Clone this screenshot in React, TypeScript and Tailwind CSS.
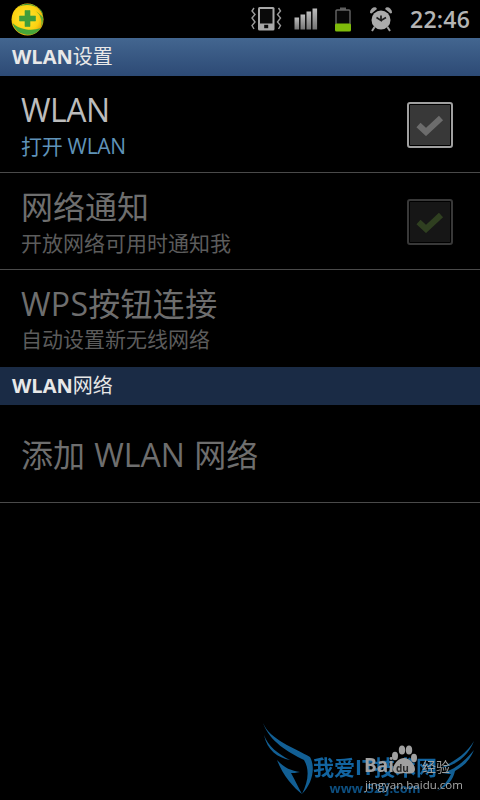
const font = { fontFamily: '"Open Sans", "Noto Sans CJK SC", sans-serif' };

function Header({ text, light }: { text: string; light?: boolean }) {
  return (
    <div
      className={`h-[38px] flex items-center pl-3 text-[20px] leading-none font-bold text-[#e8e8e8] ${
        light ? "bg-gradient-to-b from-[#436690] to-[#2d4a75]" : "bg-[#1a2b45]"
      }`}
    >
      <span className="whitespace-nowrap">
        WLAN<span className="font-normal">{text}</span>
      </span>
    </div>
  );
}

function Check({ on }: { on?: boolean }) {
  return (
    <div
      className={`mt-[2px] w-[46px] h-[46px] rounded-[3px] border-2 p-[1px] ${
        on ? "border-[#a0a0a0]" : "border-[#383838]"
      }`}
    >
      <div className={`w-full h-full flex items-center justify-center ${on ? "bg-[#383838]" : "bg-[#161616]"}`}>
        <svg width="28" height="22" viewBox="0 0 28 22">
          <path
            d="M2.5 11 L10 18 L25 4"
            fill="none"
            stroke={on ? "#6c6c6c" : "#2f3f20"}
            strokeWidth="6"
          />
        </svg>
      </div>
    </div>
  );
}

function Row({
  title,
  sub,
  titleClass,
  subClass,
  check,
  last,
}: {
  title: string;
  sub?: string;
  titleClass: string;
  subClass?: string;
  check?: "on" | "off";
  last?: boolean;
}) {
  return (
    <div
      className={`flex items-center pl-[21px] pr-[27px] border-b border-[#4a4a4a] ${
        last ? "h-[98px] pt-[2px]" : "h-[97px]"
      }`}
    >
      <div className="flex-1 min-w-0">
        <div className={`text-[32px] leading-[44px] whitespace-nowrap ${titleClass}`}>{title}</div>
        {sub && <div className={`text-[21px] leading-[29px] whitespace-nowrap ${subClass}`}>{sub}</div>}
      </div>
      {check && <Check on={check === "on"} />}
    </div>
  );
}

function StatusBar() {
  return (
    <div className="h-[38px] flex items-center bg-black">
      <svg className="ml-[11px]" width="33" height="33" viewBox="0 0 33 33">
        <defs>
          <radialGradient id="y" cx="45%" cy="45%" r="55%">
            <stop offset="0%" stopColor="#ffe635" />
            <stop offset="75%" stopColor="#fbd210" />
            <stop offset="100%" stopColor="#eba80a" />
          </radialGradient>
        </defs>
        <circle cx="16.5" cy="16.5" r="16" fill="url(#y)" />
        <path d="M7 4 A16 16 0 0 1 32 13 A16 10 0 0 0 7 4Z" fill="#3f9a35" />
        <path d="M32 14 A16 16 0 0 1 29 26 A15 15 0 0 0 25 8Z" fill="#62ac33" />
        <path d="M1.5 20 A16 16 0 0 0 30 25 A22 15 0 0 1 1.5 20Z" fill="#47a63a" />
        <path d="M14 7.5h5v5.5h5.5v5h-5.5v5.5h-5v-5.5h-5.5v-5h5.5z" fill="#3f9d3a" stroke="#3f9d3a" strokeWidth="0.6" strokeLinejoin="round" />
      </svg>
      <div className="ml-auto flex items-center">
        <svg width="31" height="24" viewBox="0 0 31 24" className="mr-[12px]">
          <rect x="7" y="0" width="16.5" height="23.5" rx="1.5" fill="#a8a8a8" />
          <rect x="9" y="2" width="12.5" height="14.5" fill="#0a0a0a" />
          <rect x="13.2" y="17.8" width="4" height="3.4" fill="#0a0a0a" />
          <path d="M3 1 L1 4 L4 7.5 L1 11 L4 15 L1 18.5 L3 22" fill="none" stroke="#999999" strokeWidth="1.4" />
          <path d="M27.5 1 L29.5 4 L26.5 7.5 L29.5 11 L26.5 15 L29.5 18.5 L27.5 22" fill="none" stroke="#999999" strokeWidth="1.4" />
        </svg>
        <svg width="24" height="22" viewBox="0 0 24 22" className="mr-[16px]">
          <defs>
            <linearGradient id="bar" x1="0" y1="0" x2="0" y2="1">
              <stop offset="0%" stopColor="#bdbdbd" />
              <stop offset="100%" stopColor="#747474" />
            </linearGradient>
          </defs>
          <rect x="0.5" y="9.5" width="4.6" height="12" fill="url(#bar)" />
          <rect x="6.5" y="6.5" width="4.6" height="15" fill="url(#bar)" />
          <rect x="12.5" y="3.5" width="4.6" height="18" fill="url(#bar)" />
          <rect x="18.5" y="0.5" width="4.6" height="21" fill="url(#bar)" />
        </svg>
        <svg width="18" height="25" viewBox="0 0 18 25" className="mr-[17px]">
          <rect x="6" y="0.5" width="6" height="2.5" fill="#5e5e5e" />
          <rect x="2" y="3" width="14" height="20" rx="1" fill="#080808" stroke="#666666" strokeWidth="1.4" />
          <rect x="1" y="16.5" width="16" height="8" rx="1.5" fill="#7fbb0a" />
        </svg>
        <svg width="24" height="26" viewBox="0 0 24 26" className="mr-[17px]">
          <circle cx="12" cy="14" r="9.5" fill="#ababab" />
          <path d="M12 9.5 V14.5 L7.5 11.5 M12 14.5 L17 11.5" fill="none" stroke="#1c1c1c" strokeWidth="1.7" />
          <path d="M1 7 A5 5 0 0 1 7 1.5 L8 3 L2.5 7.5Z" fill="#a0a0a0" />
          <path d="M23 7 A5 5 0 0 0 17 1.5 L16 3 L21.5 7.5Z" fill="#a0a0a0" />
          <path d="M5.5 21 L3 25 M18.5 21 L21 25" stroke="#a0a0a0" strokeWidth="2" />
        </svg>
        <span className="text-[23px] leading-none font-semibold text-[#b4b4b4] mr-[10px] tracking-[0.2px]">22:46</span>
      </div>
    </div>
  );
}

function Watermark() {
  return (
    <div className="absolute left-[250px] top-[710px] w-[230px] h-[90px] overflow-hidden pointer-events-none blur-[0.5px]">
      <svg width="230" height="90" viewBox="0 0 230 90" className="absolute inset-0">
        <g fill="#125f94">
          <path d="M13 13 C20 30 45 38 60 47 C66 58 62 74 52 84 C58 72 60 60 54 50 C38 42 20 32 13 13Z" />
          <path d="M14 25 C18 36 28 44 40 50 C28 48 17 40 14 25Z" />
          <path d="M27 50 C34 58 42 61 50 62 C46 63 43 63 41 63 C45 70 48 77 52 84 C44 78 33 66 27 50Z" />
          <path d="M224 31 C216 44 204 52 190 58 C206 56 218 46 224 31Z" />
          <path d="M224 40 C214 52 204 60 192 63 C198 64 200 64 201 64 C198 70 194 76 187 81 C198 76 203 70 205 61 C214 56 220 50 224 40Z" />
        </g>
      </svg>
      <div className="absolute left-[63px] top-[44px] flex flex-col items-center font-bold whitespace-nowrap">
        <div className="text-[21px] leading-[27px] text-[#1264a0]">我爱IT技术网</div>
        <div className="text-[13px] leading-[15px] text-[#0d4f80]">www.52ij.com</div>
      </div>
      <svg width="230" height="90" viewBox="0 0 230 90" className="absolute inset-0">
        <g fill="#a0a0a0">
          <ellipse cx="145" cy="46" rx="3" ry="4.2" />
          <ellipse cx="152" cy="40" rx="3.2" ry="4.6" />
          <ellipse cx="159" cy="40" rx="3.2" ry="4.6" />
          <ellipse cx="164" cy="48" rx="3" ry="4.2" />
          <path d="M154 48 C148 48 143 55 143 59 C143 64 148 64 154 63 C160 64 165 64 165 59 C165 55 160 48 154 48Z" />
        </g>
      </svg>
      <div className="absolute left-[114px] top-[46px] flex flex-col whitespace-nowrap">
        <div className="flex items-baseline h-[22px]">
          <span className="text-[19px] leading-none font-bold text-[#a0a0a0] w-[32px]">Bai</span>
          <span className="text-[10px] leading-none font-bold text-[#2a2a2a] w-[26px]">du</span>
          <span className="text-[14px] leading-none text-[#a0a0a0]">经验</span>
        </div>
        <div className="pl-px text-[11.5px] leading-[14px] text-[#a8a8a8]">jingyan.baidu.com</div>
      </div>
    </div>
  );
}

export default function App() {
  return (
    <div className="relative w-[480px] h-[800px] bg-black overflow-hidden" style={font}>
      <StatusBar />
      <Header text="设置" light />
      <Row
        title="WLAN"
        sub="打开 WLAN"
        titleClass="text-[#bcbcbc] tracking-[-0.5px]"
        subClass="text-[#5f93b8] tracking-[-0.3px]"
        check="on"
      />
      <Row
        title="网络通知"
        sub="开放网络可用时通知我"
        titleClass="text-[#6e6e6e]"
        subClass="text-[#5c5c5c]"
        check="off"
      />
      <div className="h-[97px] flex items-center pl-[21px]">
        <div className="flex flex-col">
          <div className="text-[32px] leading-[42px] whitespace-nowrap text-[#6e6e6e] tracking-[0.3px]">WPS按钮连接</div>
          <div className="text-[21px] leading-[29px] whitespace-nowrap text-[#5c5c5c]">自动设置新无线网络</div>
        </div>
      </div>
      <Header text="网络" />
      <Row title="添加 WLAN 网络" titleClass="text-[#6e6e6e] [word-spacing:1px]" last />
      <Watermark />
    </div>
  );
}
